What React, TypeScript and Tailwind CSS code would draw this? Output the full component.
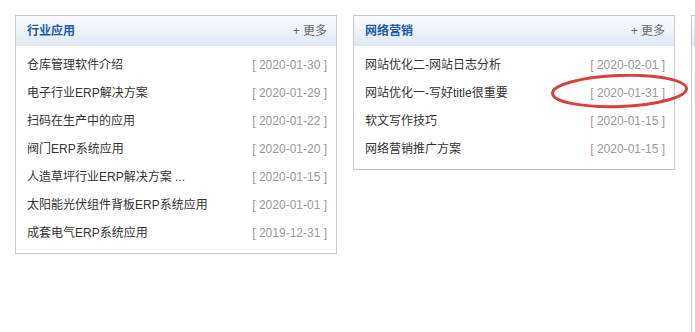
import React from "react";

interface Item {
  title: string;
  date: string;
}

const industry: Item[] = [
  { title: "仓库管理软件介绍", date: "2020-01-30" },
  { title: "电子行业ERP解决方案", date: "2020-01-29" },
  { title: "扫码在生产中的应用", date: "2020-01-22" },
  { title: "阀门ERP系统应用", date: "2020-01-20" },
  { title: "人造草坪行业ERP解决方案 ...", date: "2020-01-15" },
  { title: "太阳能光伏组件背板ERP系统应用", date: "2020-01-01" },
  { title: "成套电气ERP系统应用", date: "2019-12-31" },
];

const marketing: Item[] = [
  { title: "网站优化二-网站日志分析", date: "2020-02-01" },
  { title: "网站优化一-写好title很重要", date: "2020-01-31" },
  { title: "软文写作技巧", date: "2020-01-15" },
  { title: "网络营销推广方案", date: "2020-01-15" },
];

const font = {
  fontFamily: '"Liberation Sans", Arial, "Noto Sans CJK SC", sans-serif',
};

const Panel = ({
  title,
  items,
  marked,
}: {
  title: string;
  items: Item[];
  marked?: number;
}) => (
  <div className="w-[322px] shrink-0 self-start border border-[#c9c9c9] bg-white">
    {/* Header */}
    <div className="flex h-[30px] items-center justify-between bg-gradient-to-b from-[#fbfcfe] via-[#eef3fa] to-[#dce7f5] pl-[11px] pr-[9px]">
      <span className="text-[12px] font-bold text-[#1d5ba8]">{title}</span>
      <span className="text-[12px] text-[#666]">+ 更多</span>
    </div>

    {/* List */}
    <ul className="pb-[6px] pt-[5px]">
      {items.map((item, i) => (
        <li
          key={item.title}
          className="relative flex h-[28px] items-center justify-between pl-[11px] pr-[9px] text-[12px]"
        >
          <span className="text-[#333]">{item.title}</span>
          <span className="text-[#999]">[ {item.date} ]</span>
          {marked === i && (
            <svg
              className="pointer-events-none absolute left-[197px] top-[-5px]"
              width="140"
              height="36"
              viewBox="0 0 140 36"
            >
              <ellipse
                cx="68.5"
                cy="17"
                rx="67"
                ry="15.5"
                fill="none"
                stroke="#d9403d"
                strokeWidth="3"
                transform="rotate(-2 68.5 17)"
              />
            </svg>
          )}
        </li>
      ))}
    </ul>
  </div>
);

export default function App() {
  return (
    <div
      className="flex h-[332px] w-[695px] gap-[16px] overflow-hidden bg-white pl-[15px] pt-[15px]"
      style={font}
    >
      <Panel title="行业应用" items={industry} />
      <Panel title="网络营销" items={marketing} marked={1} />
      <div className="h-[400px] w-[322px] shrink-0 border border-[#c9c9c9] bg-white">
        <div className="h-[30px] bg-gradient-to-b from-[#fbfcfe] via-[#eef3fa] to-[#dce7f5]" />
      </div>
    </div>
  );
}
